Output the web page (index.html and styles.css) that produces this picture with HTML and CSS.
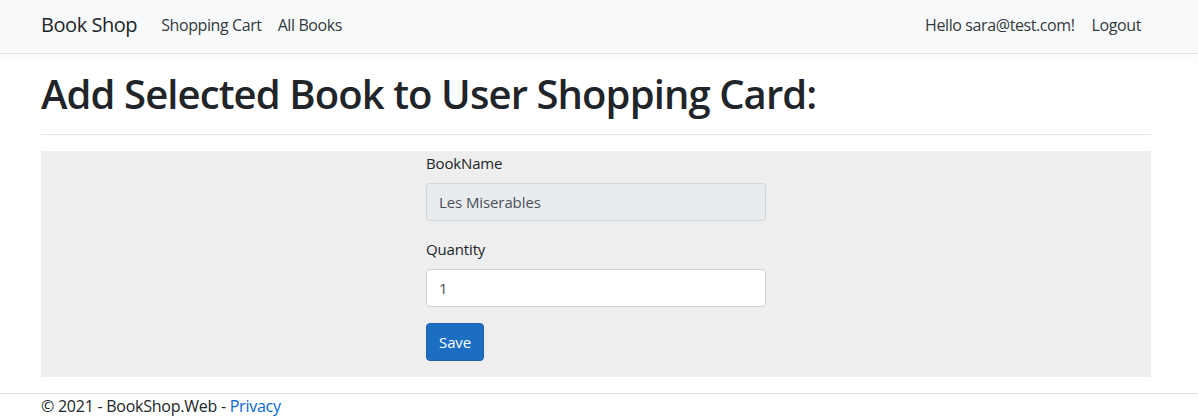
FILE: index.html
```html
<!DOCTYPE html>
<html lang="en">
<head>
<meta charset="utf-8">
<title>Book Shop</title>
<link rel="stylesheet" href="styles.css">
</head>
<body>
<header class="navbar">
  <div class="container nav-inner">
    <a class="brand" href="#">Book Shop</a>
    <nav class="nav-left">
      <a class="nav-link" href="#">Shopping Cart</a>
      <a class="nav-link" href="#">All Books</a>
    </nav>
    <nav class="nav-right">
      <a class="nav-link" href="#">Hello sara@test.com!</a>
      <a class="nav-link logout" href="#">Logout</a>
    </nav>
  </div>
</header>
<main class="container main">
  <h1 class="title">Add Selected Book to User Shopping Card:</h1>
  <hr class="rule">
  <section class="panel">
    <form class="form-col">
      <div class="form-group">
        <label class="label" for="bookname">BookName</label>
        <input class="input readonly" id="bookname" type="text" value="Les Miserables" readonly>
      </div>
      <div class="form-group">
        <label class="label" for="qty">Quantity</label>
        <input class="input" id="qty" type="text" value="1">
      </div>
      <button class="btn" type="button">Save</button>
    </form>
  </section>
</main>
<footer class="footer">
  <div class="container">&copy; 2021 - BookShop.Web - <a class="link" href="#">Privacy</a></div>
</footer>
</body>
</html>
```
FILE: styles.css
```css
* { box-sizing: border-box; }
html, body { margin: 0; padding: 0; }
body {
  font-family: "Open Sans", "Noto Sans", sans-serif;
  font-size: 16px;
  line-height: 24px;
  color: #212529;
  background: #fff;
  overflow: hidden;
}
a { text-decoration: none; }
.container {
  width: 1140px;
  padding: 0 15px;
  margin: 0 26px;
}
.navbar {
  background: #f8f9fa;
  border-bottom: 1px solid #e5e5e5;
  box-shadow: 0 4px 12px rgba(0,0,0,.03);
  height: 54px;
}
.nav-inner {
  display: flex;
  align-items: center;
  height: 53px;
  padding-bottom: 4px;
}
.brand {
  font-size: 20px;
  line-height: 30px;
  color: #212529;
  margin-right: 24px;
  letter-spacing: -0.45px;
}
.nav-left, .nav-right { display: flex; }
.nav-right { margin-left: auto; }
.nav-link {
  color: #343a40;
  font-size: 16px;
  padding: 8px 8px;
  letter-spacing: -0.4px;
}
.nav-left .nav-link:first-child { padding-left: 0; }
.logout { padding-left: 9px; padding-right: 10px; }
.main { padding-top: 16px; }
.title {
  margin: 0 0 8px;
  font-size: 40px;
  line-height: 48px;
  font-weight: 600;
  letter-spacing: -0.9px;
}
.rule {
  margin: 16px 0;
  border: 0;
  border-top: 1px solid rgba(0,0,0,.1);
  height: 0;
}
.panel {
  background: #eeeeee;
  display: flex;
  justify-content: center;
  padding-bottom: 16px;
}
.form-col { width: 340px; }
.form-group { margin-bottom: 16px; }
.label {
  display: block;
  margin-bottom: 8px;
  font-size: 15px;
  letter-spacing: -0.15px;
}
.input {
  display: block;
  width: 100%;
  height: 38px;
  padding: 6px 12px;
  font-family: inherit;
  font-size: 15px;
  color: #495057;
  background: #fff;
  border: 1px solid #ced4da;
  border-radius: 4px;
  letter-spacing: -0.1px;
}
.input.readonly { background: #e9ecef; }
.btn {
  height: 38px;
  padding: 6px 12px;
  font-family: inherit;
  font-size: 15px;
  color: #fff;
  background: #1b6ec2;
  border: 1px solid #1861ac;
  border-radius: 4px;
  letter-spacing: -0.1px;
}
.footer {
  margin-top: 16px;
  border-top: 1px solid #dee2e6;
  font-size: 16px;
  color: #212529;
  letter-spacing: -0.25px;
}
.link { color: #0366d6; }
```
